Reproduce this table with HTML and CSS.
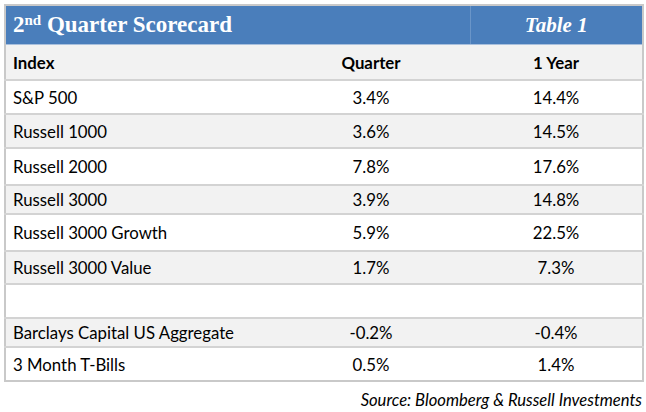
FILE: index.html
```html
<!DOCTYPE html>
<html>
<head>
<meta charset="utf-8">
<link rel="stylesheet" href="styles.css">
</head>
<body>
<div class="wrap">
  <table class="score">
    <colgroup>
      <col class="c1"><col class="c2"><col class="c3">
    </colgroup>
    <tr class="title-row">
      <th class="title" colspan="2">2<sup>nd</sup> Quarter Scorecard</th>
      <th class="tag">Table 1</th>
    </tr>
    <tr class="head">
      <td>Index</td><td class="num">Quarter</td><td class="num">1 Year</td>
    </tr>
    <tr><td>S&amp;P 500</td><td class="num">3.4%</td><td class="num">14.4%</td></tr>
    <tr><td>Russell 1000</td><td class="num">3.6%</td><td class="num">14.5%</td></tr>
    <tr><td>Russell 2000</td><td class="num">7.8%</td><td class="num">17.6%</td></tr>
    <tr><td>Russell 3000</td><td class="num">3.9%</td><td class="num">14.8%</td></tr>
    <tr><td>Russell 3000 Growth</td><td class="num">5.9%</td><td class="num">22.5%</td></tr>
    <tr><td>Russell 3000 Value</td><td class="num">1.7%</td><td class="num">7.3%</td></tr>
    <tr><td></td><td class="num"></td><td class="num"></td></tr>
    <tr><td>Barclays Capital US Aggregate</td><td class="num">-0.2%</td><td class="num">-0.4%</td></tr>
    <tr><td>3 Month T-Bills</td><td class="num">0.5%</td><td class="num">1.4%</td></tr>
  </table>
  <div class="source">Source: Bloomberg &amp; Russell Investments</div>
</div>
</body>
</html>
```
FILE: styles.css
```css
html, body {
  margin: 0;
  padding: 0;
  background: #ffffff;
}
.wrap {
  padding: 4px 4px 0 4px;
  width: 638px;
}
.score {
  width: 638px;
  border-collapse: collapse;
  border: 2px solid #c9c9c9;
  table-layout: fixed;
  font-family: "Lato", "Liberation Sans", sans-serif;
  font-size: 16.8px;
  color: #000000;
}
.c1 { width: 267px; }
.c2 { width: 198px; }
.c3 { width: 173px; }
.score td, .score th {
  padding: 0 0 0 7px;
  border-bottom: 2px solid #d3d3d3;
  vertical-align: middle;
  text-align: left;
}
.score td.num {
  text-align: center;
  padding: 0;
}
.score tr:nth-child(even) td { background: #f2f2f2; }
.score tr:nth-child(odd) td { background: #ffffff; }
.title-row th {
  background: #4a7ebb;
  color: #ffffff;
  height: 38px;
  border-bottom: 1px solid #a9c0dd;
  font-family: "Liberation Serif", serif;
  font-weight: bold;
}
.title {
  font-size: 23px;
}
.title sup {
  font-size: 15px;
  vertical-align: 7px;
  line-height: 0;
}
.score th.tag {
  text-align: center;
  font-style: italic;
  font-size: 21px;
  padding: 0;
  border-left: 1px solid #6a95c8;
}
.head td {
  font-weight: bold;
  height: 34px;
}
.score tr:nth-child(3) td { height: 32px; }
.score tr:nth-child(4) td { height: 32px; }
.score tr:nth-child(5) td { height: 35px; }
.score tr:nth-child(6) td { height: 27px; }
.score tr:nth-child(7) td { height: 35px; }
.score tr:nth-child(8) td { height: 31px; }
.score tr:nth-child(9) td { height: 32px; }
.score tr:nth-child(10) td { height: 27px; }
.score tr:nth-child(11) td { height: 32px; border-bottom: none; }
.source {
  text-align: right;
  font-family: "Lato", "Liberation Sans", sans-serif;
  font-style: italic;
  font-size: 16.6px;
  color: #000000;
  padding-top: 8px;
}
```
